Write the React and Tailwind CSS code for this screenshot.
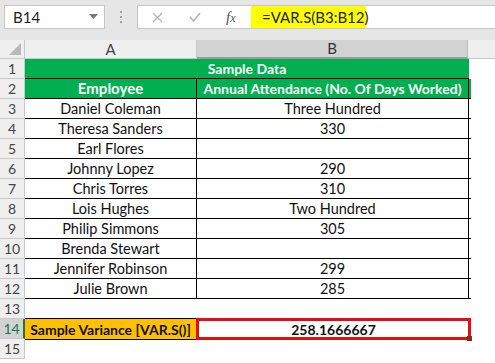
import React from "react";

const rows = [
  ["Daniel Coleman", "Three Hundred"],
  ["Theresa Sanders", "330"],
  ["Earl Flores", ""],
  ["Johnny Lopez", "290"],
  ["Chris Torres", "310"],
  ["Lois Hughes", "Two Hundred"],
  ["Philip Simmons", "305"],
  ["Brenda Stewart", ""],
  ["Jennifer Robinson", "299"],
  ["Julie Brown", "285"],
];

function RowHead({ n, active }) {
  return (
    <div
      className={
        "w-[25px] h-[20px] flex items-center justify-center text-[14px] border-b border-[#c8c8c8] " +
        (active
          ? "bg-[#d2d2d2] text-[#217346] border-r-2 border-r-[#217346]"
          : "bg-[#efefef] text-[#444] border-r border-r-[#c8c8c8]")
      }
    >
      {n}
    </div>
  );
}

export default function App() {
  return (
    <div
      className="w-[495px] h-[363px] overflow-hidden bg-white text-[#111]"
      style={{ fontFamily: 'Lato, "Open Sans", sans-serif' }}
    >
      {/* formula bar */}
      <div className="h-[40px] bg-[#e6e6e6] flex items-start pt-[5px]">
        <div className="ml-[4px] w-[101px] h-[24px] bg-white border border-[#c6c6c6] flex items-center justify-between pl-[8px] pr-[6px] text-[15px] text-[#222]">
          <span>B14</span>
          <svg width="9" height="6" viewBox="0 0 9 6">
            <path d="M0 0 L9 0 L4.5 5 Z" fill="#777" />
          </svg>
        </div>
        <div className="w-[32px] h-[24px] flex flex-col items-center justify-center gap-[3px]">
          <span className="w-[2px] h-[2px] bg-[#a0a0a0]" />
          <span className="w-[2px] h-[2px] bg-[#a0a0a0]" />
          <span className="w-[2px] h-[2px] bg-[#a0a0a0]" />
        </div>
        <div className="flex-1 h-[24px] bg-white border border-[#c6c6c6] border-r-0 flex items-center">
          <div className="w-[113px] flex items-center">
            <svg className="ml-[14px]" width="11" height="11" viewBox="0 0 11 11">
              <path d="M1 1 L10 10 M10 1 L1 10" stroke="#b4b4b4" strokeWidth="1.3" />
            </svg>
            <svg className="ml-[26px]" width="12" height="10" viewBox="0 0 12 10">
              <path d="M1 5 L4.5 9 L11 1" stroke="#b4b4b4" strokeWidth="1.6" fill="none" />
            </svg>
            <span
              className="ml-[25px] text-[15px] italic text-[#555]"
              style={{ fontFamily: '"Liberation Serif", serif' }}
            >
              f<span className="text-[12px]">x</span>
            </span>
          </div>
          <div className="h-full w-[115px] bg-[#ffff00] flex items-center pl-[11px] text-[15px] text-[#222]">
            =VAR.S(B3:B12)
          </div>
        </div>
      </div>

      {/* column headers */}
      <div className="flex h-[19px] text-[15px]">
        <div className="w-[25px] bg-[#efefef] border-r border-b border-[#c8c8c8] flex items-end justify-end p-[3px]">
          <svg width="12" height="12" viewBox="0 0 12 12">
            <path d="M12 0 L12 12 L0 12 Z" fill="#b9b9b9" />
          </svg>
        </div>
        <div className="w-[172px] bg-[#efefef] border-r border-b border-[#c8c8c8] flex items-center justify-center text-[#444]">
          A
        </div>
        <div className="w-[271px] bg-[#d2d2d2] border-r border-[#bcbcbc] border-b-2 border-b-[#9a9a9a] flex items-center justify-center text-[#333]">
          B
        </div>
        <div className="flex-1 bg-[#efefef] border-b border-[#c8c8c8]" />
      </div>

      {/* rows */}
      <div className="flex">
        <div className="flex flex-col">
          {Array.from({ length: 15 }, (_, i) => (
            <RowHead key={i} n={i + 1} active={i === 13} />
          ))}
        </div>
        <div className="flex flex-col text-[14.5px] whitespace-nowrap">
          <div className="w-[444px] h-[20px] bg-[#00b050] text-white font-bold text-[14px] flex items-center justify-center border-b border-black">
            Sample Data
          </div>
          <div className="flex h-[20px] bg-[#00b050] text-white font-bold text-[14px] border-b border-black">
            <div className="w-[172px] flex items-center justify-center border-r border-black text-[15px]">Employee</div>
            <div className="w-[272px] flex items-center justify-center border-r border-black">
              Annual Attendance (No. Of Days Worked)
            </div>
          </div>
          {rows.map((r, i) => (
            <div key={i} className="flex h-[20px] border-b border-black">
              <div className="w-[172px] flex items-center justify-center border-r border-black">{r[0]}</div>
              <div className="w-[272px] flex items-center justify-center border-r border-black">{r[1]}</div>
            </div>
          ))}
          <div className="h-[20px]" />
          <div className="flex h-[22px] -mt-[1px]">
            <div className="w-[171px] bg-[#ffc000] font-bold text-[14px] flex items-center justify-center border-y border-black">
              Sample Variance [VAR.S()]
            </div>
            <div className="relative w-[275px] border-[3px] border-[#e01010] flex items-center justify-center font-bold text-[14px]">
              258.1666667
              <span className="absolute -right-[4px] -bottom-[4px] w-[5px] h-[5px] bg-[#8a2a1a]" />
            </div>
          </div>
        </div>
      </div>
    </div>
  );
}
